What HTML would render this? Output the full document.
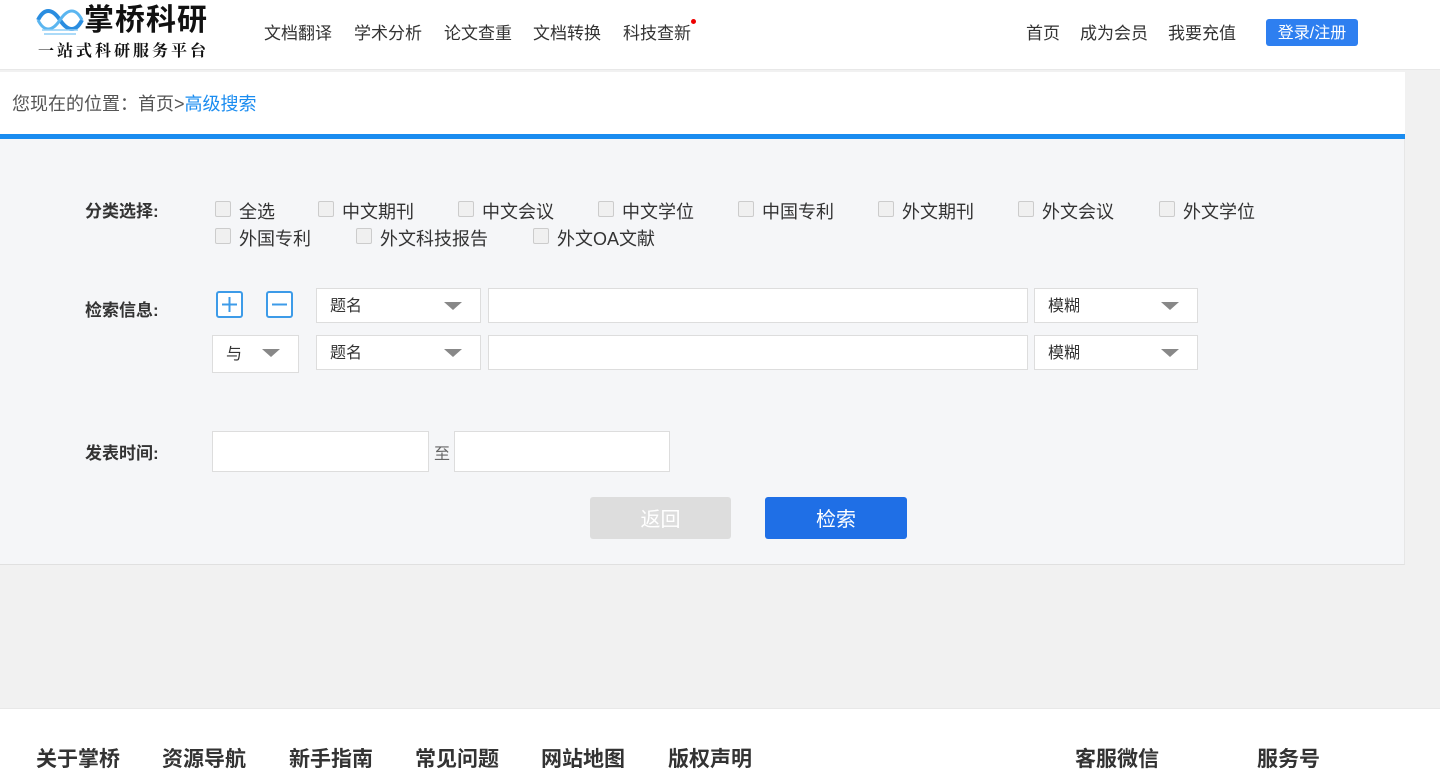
<!DOCTYPE html><html><head><meta charset="utf-8"><style>
*{margin:0;padding:0;box-sizing:border-box}
body{width:1440px;height:782px;overflow:hidden;background:#f1f1f1;font-family:"Liberation Sans","Noto Sans CJK SC",sans-serif;color:#333;position:relative}
.a{position:absolute;white-space:nowrap;line-height:1.2}
.hdr{position:absolute;left:0;top:0;width:1440px;height:70px;background:#fff;border-bottom:1px solid #e8e8e8}
.nav{font-size:17px;color:#333;top:24px}
.cb{position:absolute;width:16px;height:16px;border:1px solid #ccc;background:#f0f0f0;border-radius:2px}
.lb{font-size:18px;color:#333}
.box{position:absolute;background:#fff;border:1px solid #ddd;font-size:16px;color:#333;line-height:1.2}
.tri{position:absolute;width:0;height:0;border-left:9px solid transparent;border-right:9px solid transparent;border-top:8px solid #888}
.ft{font-size:21px;font-weight:bold;color:#333;top:747px}
</style></head><body>
<div class="hdr"></div>
<svg class="a" style="left:36px;top:6px" width="48" height="30" viewBox="0 0 48 30"><path d="M2 14 C8 2,16 2,24 14 S40 26,46 14" fill="none" stroke="#2a8de0" stroke-width="4"/><path d="M2 14 C8 26,16 26,24 14 S40 2,46 14" fill="none" stroke="#5bb6f0" stroke-width="3"/><path d="M6 24h36M8 28h32" stroke="#8fcdf5" stroke-width="1.5"/></svg>
<div class="a" style="left:84px;top:3px;font-size:30px;font-weight:bold;color:#111;letter-spacing:1px">掌桥科研</div>
<div class="a" style="left:38px;top:40px;font-size:16px;font-weight:bold;color:#111;letter-spacing:3px;font-family:'Noto Serif CJK SC',serif">一站式科研服务平台</div>
<div class="a nav" style="left:264px">文档翻译</div>
<div class="a nav" style="left:354px">学术分析</div>
<div class="a nav" style="left:444px">论文查重</div>
<div class="a nav" style="left:533px">文档转换</div>
<div class="a nav" style="left:623px">科技查新</div>
<div class="a" style="left:691px;top:19px;width:5px;height:5px;border-radius:50%;background:#e00"></div>
<div class="a nav" style="left:1026px">首页</div>
<div class="a nav" style="left:1080px">成为会员</div>
<div class="a nav" style="left:1168px">我要充值</div>
<div class="a" style="left:1266px;top:19px;width:92px;height:27px;background:#2e7ff0;border-radius:3px;color:#fff;font-size:16px;text-align:center;line-height:29px">登录/注册</div>
<div class="a" style="left:0;top:72px;width:1405px;height:62px;background:#fff"></div>
<div class="a" style="left:12px;top:94px;font-size:18px;color:#555">您现在的位置：首页&gt;<span style="color:#1a8cf0">高级搜索</span></div>
<div class="a" style="left:0;top:134px;width:1405px;height:5px;background:#1a8cf0"></div>
<div class="a" style="left:0;top:139px;width:1405px;height:426px;background:#f5f6f8;border-bottom:1px solid #e0e0e0;border-right:1px solid #e6e6e6"></div>
<div class="a" style="left:85px;top:202px;font-size:17px;font-weight:bold">分类选择:</div>
<div class="cb" style="left:215px;top:201px"></div><div class="a lb" style="left:239px;top:202px">全选</div>
<div class="cb" style="left:318px;top:201px"></div><div class="a lb" style="left:342px;top:202px">中文期刊</div>
<div class="cb" style="left:458px;top:201px"></div><div class="a lb" style="left:482px;top:202px">中文会议</div>
<div class="cb" style="left:598px;top:201px"></div><div class="a lb" style="left:622px;top:202px">中文学位</div>
<div class="cb" style="left:738px;top:201px"></div><div class="a lb" style="left:762px;top:202px">中国专利</div>
<div class="cb" style="left:878px;top:201px"></div><div class="a lb" style="left:902px;top:202px">外文期刊</div>
<div class="cb" style="left:1018px;top:201px"></div><div class="a lb" style="left:1042px;top:202px">外文会议</div>
<div class="cb" style="left:1159px;top:201px"></div><div class="a lb" style="left:1183px;top:202px">外文学位</div>
<div class="cb" style="left:215px;top:228px"></div><div class="a lb" style="left:239px;top:229px">外国专利</div>
<div class="cb" style="left:356px;top:228px"></div><div class="a lb" style="left:380px;top:229px">外文科技报告</div>
<div class="cb" style="left:533px;top:228px"></div><div class="a lb" style="left:557px;top:229px">外文OA文献</div>
<div class="a" style="left:85px;top:301px;font-size:17px;font-weight:bold">检索信息:</div>
<svg class="a" style="left:216px;top:291px" width="28" height="28"><rect x="1" y="1" width="25" height="25" rx="2" fill="#fff" stroke="#3d9be8" stroke-width="2"/><path d="M6 13.5h15M13.5 6v15" stroke="#3d9be8" stroke-width="2"/></svg>
<svg class="a" style="left:266px;top:291px" width="28" height="28"><rect x="1" y="1" width="25" height="25" rx="2" fill="#fff" stroke="#3d9be8" stroke-width="2"/><path d="M6 13.5h15" stroke="#3d9be8" stroke-width="2"/></svg>
<div class="box" style="left:316px;top:288px;width:165px;height:35px;padding:8px 13px">题名</div><div class="tri" style="left:444px;top:302px"></div>
<div class="box" style="left:488px;top:288px;width:540px;height:35px"></div>
<div class="box" style="left:1034px;top:288px;width:164px;height:35px;padding:8px 13px">模糊</div><div class="tri" style="left:1161px;top:302px"></div>
<div class="box" style="left:212px;top:335px;width:87px;height:38px;padding:9px 13px">与</div><div class="tri" style="left:262px;top:349px"></div>
<div class="box" style="left:316px;top:335px;width:165px;height:35px;padding:8px 13px">题名</div><div class="tri" style="left:444px;top:349px"></div>
<div class="box" style="left:488px;top:335px;width:540px;height:35px"></div>
<div class="box" style="left:1034px;top:335px;width:164px;height:35px;padding:8px 13px">模糊</div><div class="tri" style="left:1161px;top:349px"></div>
<div class="a" style="left:85px;top:444px;font-size:17px;font-weight:bold">发表时间:</div>
<div class="box" style="left:212px;top:431px;width:217px;height:41px"></div>
<div class="a" style="left:434px;top:445px;font-size:16px;color:#666">至</div>
<div class="box" style="left:454px;top:431px;width:216px;height:41px"></div>
<div class="a" style="left:590px;top:497px;width:141px;height:42px;background:#ddd;border-radius:3px;color:#fff;font-size:20px;text-align:center;line-height:47px">返回</div>
<div class="a" style="left:765px;top:497px;width:142px;height:42px;background:#1f6fe6;border-radius:3px;color:#fff;font-size:20px;text-align:center;line-height:47px">检索</div>
<div class="a" style="left:0;top:708px;width:1440px;height:74px;background:#fff;border-top:1px solid #e8e8e8"></div>
<div class="a ft" style="left:36px">关于掌桥</div>
<div class="a ft" style="left:162px">资源导航</div>
<div class="a ft" style="left:289px">新手指南</div>
<div class="a ft" style="left:415px">常见问题</div>
<div class="a ft" style="left:541px">网站地图</div>
<div class="a ft" style="left:668px">版权声明</div>
<div class="a ft" style="left:1075px">客服微信</div>
<div class="a ft" style="left:1257px">服务号</div>
</body></html>
